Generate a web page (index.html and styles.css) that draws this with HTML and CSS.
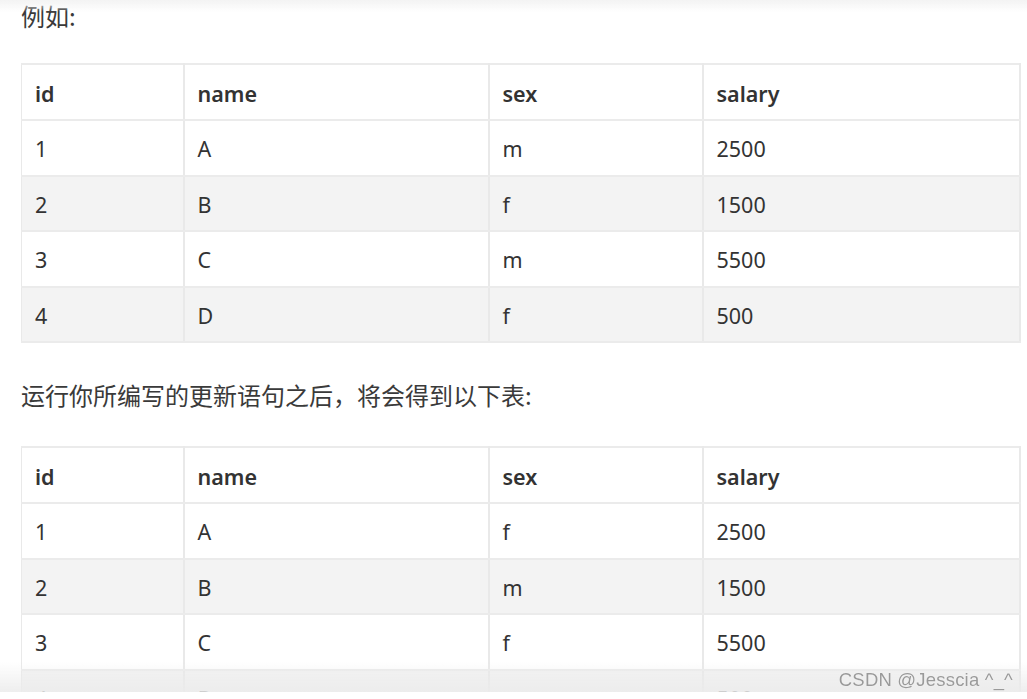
FILE: index.html
```html
<!DOCTYPE html>
<html lang="zh-CN">
<head>
<meta charset="utf-8">
<title>例如</title>
<link rel="stylesheet" href="styles.css">
</head>
<body>
<div class="article">
  <p class="lead">例如:</p>
  <table class="data">
    <colgroup><col class="c1"><col class="c2"><col class="c3"><col class="c4"></colgroup>
    <thead><tr><th>id</th><th>name</th><th>sex</th><th>salary</th></tr></thead>
    <tbody>
      <tr><td>1</td><td>A</td><td>m</td><td>2500</td></tr>
      <tr><td>2</td><td>B</td><td>f</td><td>1500</td></tr>
      <tr><td>3</td><td>C</td><td>m</td><td>5500</td></tr>
      <tr><td>4</td><td>D</td><td>f</td><td>500</td></tr>
    </tbody>
  </table>
  <p class="lead second">运行你所编写的更新语句之后，将会得到以下表:</p>
  <table class="data">
    <colgroup><col class="c1"><col class="c2"><col class="c3"><col class="c4"></colgroup>
    <thead><tr><th>id</th><th>name</th><th>sex</th><th>salary</th></tr></thead>
    <tbody>
      <tr><td>1</td><td>A</td><td>f</td><td>2500</td></tr>
      <tr><td>2</td><td>B</td><td>m</td><td>1500</td></tr>
      <tr><td>3</td><td>C</td><td>f</td><td>5500</td></tr>
      <tr><td>4</td><td>D</td><td>m</td><td>500</td></tr>
    </tbody>
  </table>
</div>
<div class="watermark">CSDN @Jesscia ^_^</div>
</body>
</html>
```
FILE: styles.css
```css
html, body {
  margin: 0;
  padding: 0;
  background: #fff;
  overflow: hidden;
}
body {
  font-family: "Noto Sans", "Noto Sans CJK SC", sans-serif;
  color: #333;
  font-size: 21px;
}
body::before {
  content: "";
  position: fixed;
  left: 0; right: 0; top: 0;
  height: 12px;
  background: linear-gradient(#f3f3f3, rgba(255,255,255,0));
  z-index: 2;
}
body::after {
  content: "";
  position: fixed;
  left: 0; right: 0; top: 662px;
  height: 37px;
  background: linear-gradient(rgba(235,235,235,0), rgba(235,235,235,0.85) 80%, #fff 81%, #fff);
  z-index: 2;
}
.article {
  padding: 1px 8px 0 21px;
}
.lead {
  margin: 0 0 32px;
  line-height: 30px;
  font-family: "Noto Sans CJK SC", sans-serif;
  font-size: 24px;
  color: #3a3a3a;
}
.lead.second {
  margin: 37px 0 36px;
}
.data {
  width: 998px;
  border-collapse: collapse;
  table-layout: fixed;
}
.c1 { width: 162px; }
.c2 { width: 305px; }
.c3 { width: 214px; }
.c4 { width: 317px; }
.data th, .data td {
  border-left: 1px solid #e9e9e9;
  border-right: 2px solid #e9e9e9;
  border-top: 2px solid #ebebeb;
  border-bottom: 2px solid #ebebeb;
  padding: 3px 13px 0;
  height: 50.5px;
  text-align: left;
  vertical-align: middle;
  line-height: 24px;
  font-size: 21.5px;
}
.data th {
  font-weight: 600;
  height: 51px;
}
.data tbody tr:nth-child(even) td {
  background: #f3f3f3;
}
.watermark {
  position: fixed;
  right: 14px;
  top: 669px;
  font-family: "Liberation Sans", Arial, sans-serif;
  font-size: 18.5px;
  color: #9a9a9a;
  text-shadow: 0 0 1px #fff;
  z-index: 3;
  letter-spacing: 0.2px;
}
```
